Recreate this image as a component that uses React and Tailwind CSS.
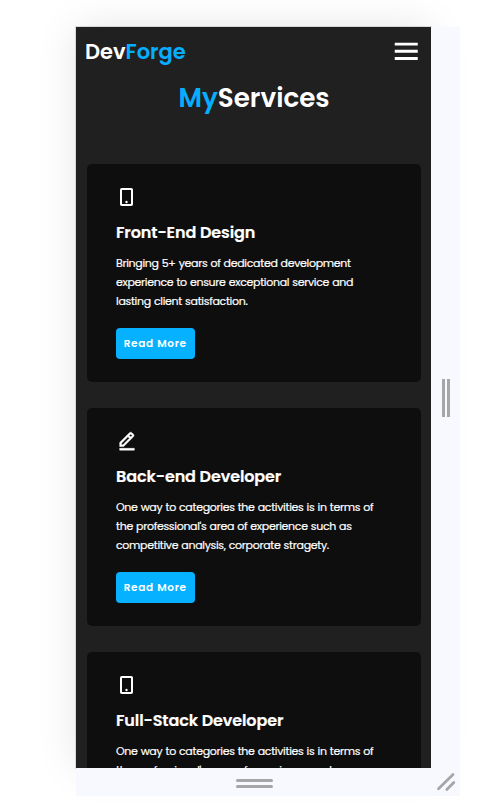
import { BiEditAlt, BiMenu } from "react-icons/bi";

function PhoneIcon({ className }) {
  return (
    <svg viewBox="0 0 22 22" className={className} fill="none" stroke="currentColor" strokeWidth="2">
      <rect x="5" y="3" width="11" height="16" rx="0.8" />
      <circle cx="10.5" cy="16" r="1.2" fill="currentColor" stroke="none" />
    </svg>
  );
}

function PencilIcon({ className }) {
  return <BiEditAlt className={`${className} stroke-current stroke-[0.5px]`} />;
}

const services = [
  {
    Icon: PhoneIcon,
    title: "Front-End Design",
    lines: [
      "Bringing 5+ years of dedicated development",
      "experience to ensure exceptional service and",
      "lasting client satisfaction.",
    ],
  },
  {
    Icon: PencilIcon,
    title: "Back-end Developer",
    lines: [
      "One way to categories the activities is in terms of",
      "the professional's area of experience such as",
      "competitive analysis, corporate stragety.",
    ],
  },
  {
    Icon: PhoneIcon,
    title: "Full-Stack Developer",
    lines: [
      "One way to categories the activities is in terms of",
      "the professional's area of experience such as",
    ],
  },
];

function ServiceCard({ Icon, title, lines }) {
  return (
    <article className="flex h-[217.5px] shrink-0 flex-col items-start rounded-[5px] bg-[#0e0e0e] pt-[22px] pl-[29.5px]">
      <Icon className="-ml-[0.5px] size-[22px]" />
      <h3 className="mt-[13px] h-6 text-[16px] leading-6 font-semibold tracking-[-0.11px] whitespace-nowrap [-webkit-text-stroke:0.2px_white]">{title}</h3>
      <p className="mt-[9px] text-[11px] leading-[19px] tracking-[-0.32px] [word-spacing:0.5px] whitespace-nowrap [-webkit-text-stroke:0.2px_white]">
        {lines.map((text) => (
          <span key={text} className="block">{text}</span>
        ))}
      </p>
      <button className="mt-[16.5px] h-[31px] w-[78.5px] rounded-[4px] bg-[#06b2ff] pt-px text-[10.5px] font-semibold tracking-[0.7px] whitespace-nowrap">
        Read More
      </button>
    </article>
  );
}

export default function App() {
  return (
    <div className="h-[807px] w-[489px] overflow-hidden bg-white pt-[27px] pl-[76px]">
      <div className="grid h-[769px] w-[384px] grid-cols-[355px_29px] grid-rows-[741px_28px]">
        <main className="flex flex-col overflow-hidden bg-[#202020] font-['Poppins','Inter',sans-serif] text-white shadow-[0_0_0_1px_rgba(0,0,0,0.12),0_0_38px_rgba(0,0,0,0.1)]">
          <header className="flex h-[49px] shrink-0 items-center justify-between pr-[7.5px] pl-[9px]">
            <div className="text-[21px] font-semibold">
              Dev<span className="text-[#06aeff]">Forge</span>
            </div>
            <BiMenu className="size-[34.5px]" />
          </header>
          <h1 className="h-[88px] shrink-0 pt-[3px] pl-px text-center text-[26.2px] leading-[38px] font-semibold">
            <span className="text-[#06aeff]">My</span>Services
          </h1>
          <section className="flex flex-col gap-[26.5px] pr-[10px] pl-[10.5px]">
            {services.map((service) => (
              <ServiceCard key={service.title} {...service} />
            ))}
          </section>
        </main>
        <div className="z-10 flex items-center justify-center gap-[2px] bg-[#f8f9fe]">
          <span className="h-[38px] w-[3px] bg-[#a5a6a8]" />
          <span className="h-[38px] w-[3px] bg-[#a5a6a8]" />
        </div>
        <div className="z-10 flex flex-col items-center justify-center gap-[3px] bg-[#f8f9fe] pt-[3px] pl-[1px]">
          <span className="h-[3px] w-[37px] rounded-full bg-[#a5a6a8]" />
          <span className="h-[3px] w-[37px] rounded-full bg-[#a5a6a8]" />
        </div>
        <div className="z-10 flex items-center justify-center bg-[#f8f9fe]">
          <svg viewBox="0 0 29 28" className="h-7 w-[29px]" fill="none" stroke="#a5a6a8" strokeWidth="2.8" strokeLinecap="round">
            <path d="M7.5 20.8 22 6.5M15.8 21.5l7-7" />
          </svg>
        </div>
      </div>
    </div>
  );
}
